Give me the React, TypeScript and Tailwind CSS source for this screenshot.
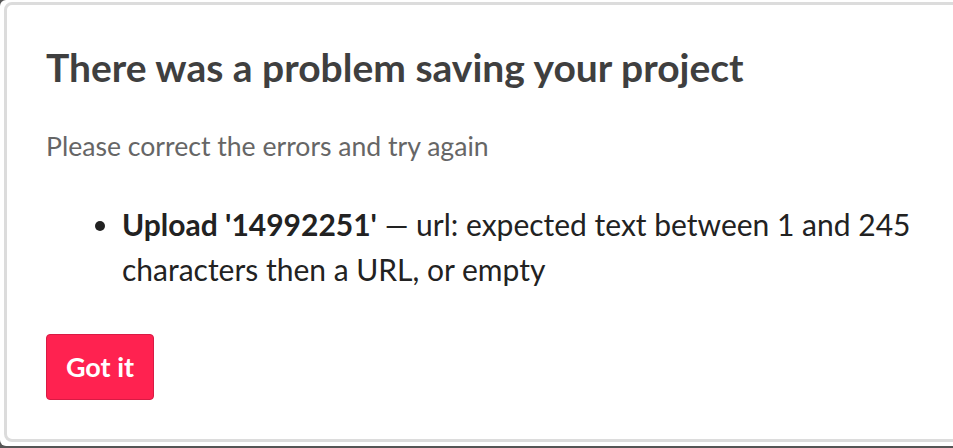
export default function App() {
  return (
    <div className="h-[448px] w-[953px] overflow-hidden bg-[#555]" style={{ fontFamily: 'Lato, "Open Sans", sans-serif' }}>
      <div className="h-[446px] w-[980px] rounded-[6px] bg-white pl-[4px] pt-[2px]">
        <div className="h-[440px] w-[990px] rounded-[8px] border-[3px] border-[#dcdcdc] pl-[39px] pt-[38px]">
          <h1 className="text-[39px] font-bold leading-[48px] text-[#3f3f3f]">There was a problem saving your project</h1>
          <p className="mt-[39px] text-[26.6px] leading-[32px] text-[#666]">Please correct the errors and try again</p>
          <ul className="mt-[40px] w-[900px] list-disc pl-[76px] text-[30px] leading-[45px] text-[#222]">
            <li>
              <strong>Upload '14992251'</strong> — url: expected text between 1 and 245 characters then a URL, or empty
            </li>
          </ul>
          <button className="mt-[42px] h-[66px] w-[108px] rounded-[4px] border border-[#d81b44] bg-[#ff2250] text-[27px] font-bold text-white">
            Got it
          </button>
        </div>
      </div>
    </div>
  );
}
